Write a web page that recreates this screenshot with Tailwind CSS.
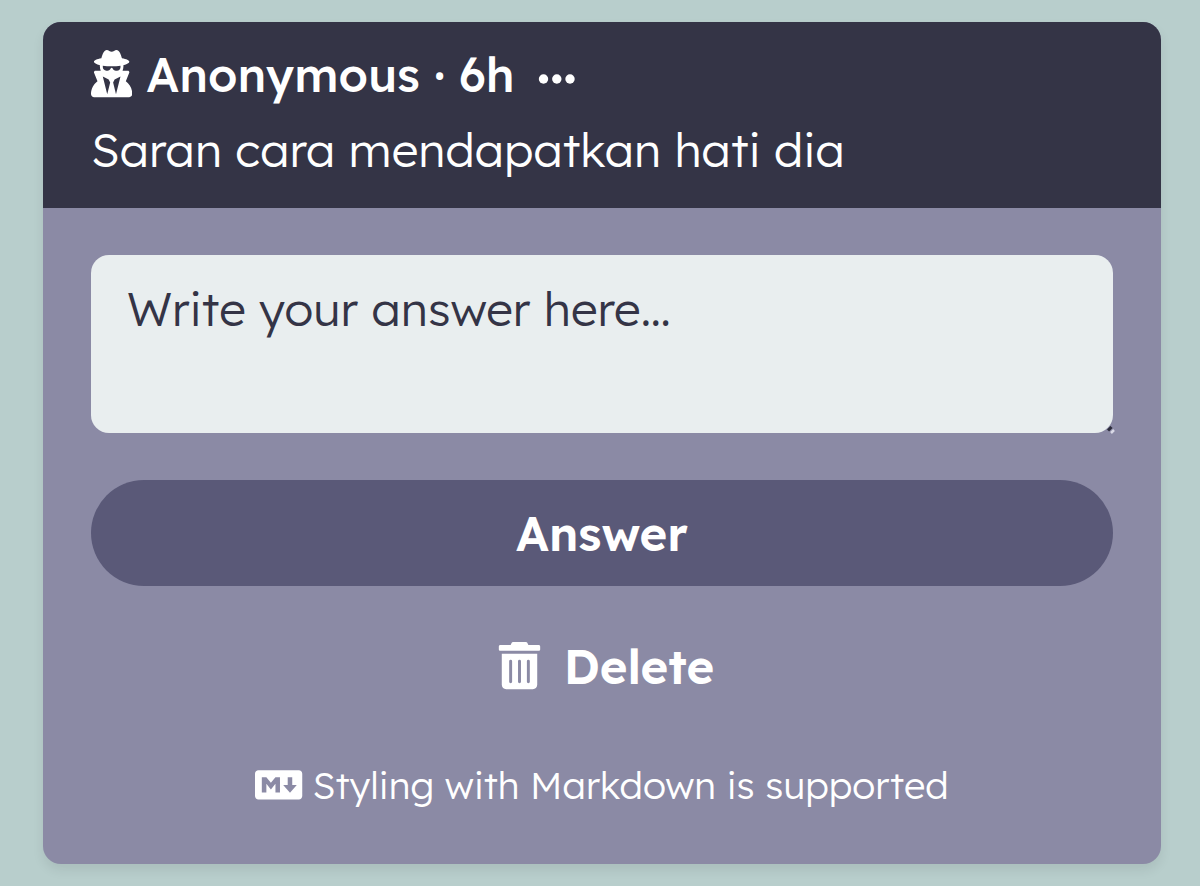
<!DOCTYPE html>
<html lang="id">

<head>
  <meta charset="UTF-8">
  <meta name="viewport" content="width=device-width, initial-scale=1.0">
  <title>Answer question</title>
  <script src="https://cdn.jsdelivr.net/npm/@tailwindcss/browser@4"></script>
</head>

<body class="h-screen overflow-hidden bg-[#b8cecc] pt-[22px] pl-[43px] font-['Lexend',sans-serif] text-white">

  <!-- Question card -->
  <div class="flex h-[842px] w-[1118px] flex-col overflow-hidden rounded-[18px] bg-[#8b8aa5] shadow-[0_6px_12px_rgba(0,0,0,0.08)]">

    <!-- Header -->
    <div class="h-[186px] bg-[#343446] px-12 pt-[21px]">
      <div class="flex h-[64px] items-center">
        <svg class="h-[47.25px] w-[41.3px] shrink-0 -translate-y-px" viewBox="0 0 448 512" fill="currentColor">
          <path d="M377.7 338.8l37.15-92.87C419 235.4 411.2 224 399.9 224h-57.48C348.5 209.2 352 193 352 176c0-4.117-.8359-8.057-1.217-12.08C390.7 155.1 416 142.3 416 128c0-16.08-31.75-30.28-80.31-38.99C323.8 45.15 304.9 0 277.4 0c-10.38 0-19.62 4.5-27.38 10.5c-15.25 11.88-36.75 11.88-52 0C190.3 4.5 181.1 0 170.7 0C143.2 0 124.4 45.16 112.5 88.98C63.83 97.68 32 111.9 32 128c0 14.34 25.31 27.13 65.22 35.92C96.84 167.9 96 171.9 96 176C96 193 99.47 209.2 105.5 224H48.02C36.7 224 28.96 235.4 33.16 245.9l37.15 92.87C27.87 370.4 0 420.4 0 477.3C0 496.5 15.52 512 34.66 512H413.3C432.5 512 448 496.5 448 477.3C448 420.4 420.1 370.4 377.7 338.8zM176 479.1L128 288l64 32l16 32L176 479.1zM271.1 479.1L240 352l16-32l64-32L271.1 479.1zM320 186C320 207 302.8 224 281.6 224h-12.33c-16.46 0-30.29-10.39-35.63-24.99C232.1 194.9 228.4 192 224 192S215.9 194.9 214.4 199C209 213.6 195.2 224 178.8 224h-12.33C145.2 224 128 207 128 185.1V169.5C156.3 173.6 188.1 176 224 176s67.74-2.383 96-6.5V186z" />
        </svg>
        <span class="ml-[14px] text-[47.25px] font-medium whitespace-nowrap">Anonymous · 6h</span>
        <button type="button" class="ml-[22px] translate-y-[4px]">
          <svg class="h-3 w-10" viewBox="0 0 40 12" fill="currentColor">
            <circle cx="6.5" cy="6" r="4.7" />
            <circle cx="19.8" cy="6" r="4.7" />
            <circle cx="33" cy="6" r="4.7" />
          </svg>
        </button>
      </div>
      <p class="h-[84px] text-[47.25px] leading-[86px] font-light whitespace-nowrap">Saran cara mendapatkan hati dia</p>
    </div>

    <!-- Answer form -->
    <form class="flex flex-col px-12 pt-[47px]" onsubmit="event.preventDefault()">
      <div class="relative h-[178px]">
        <textarea placeholder="Write your answer here…"
          class="block h-[178px] w-full resize-none overflow-hidden rounded-[18px] bg-[#e9eeef] px-9 pt-6 text-[47.25px] leading-[60px] font-light text-[#343446] placeholder:text-[#343446] focus:outline-none"></textarea>
        <svg class="absolute right-[-2px] bottom-[-1px] h-2 w-2" viewBox="0 0 8 8">
          <path d="M1 4.5 4.5 1" stroke="#2c2c3b" stroke-width="3" />
          <path d="M4 7 7 4" stroke="#d9d9e6" stroke-width="2.5" />
        </svg>
      </div>
      <button type="submit" class="mt-[47px] h-[106px] rounded-full bg-[#5a5978] pt-[2px] text-[47.25px] font-semibold">
        Answer
      </button>
      <button type="button" class="mt-[27px] flex h-[106px] items-center justify-center text-[47.25px] font-semibold">
        <svg class="mr-[15px] h-[47.25px] w-[59px]" viewBox="0 0 448 512" fill="currentColor">
          <path d="M32 464C32 490.5 53.5 512 80 512h288c26.5 0 48-21.5 48-48V128H32V464zM304 208a16 16 0 0 1 32 0v224a16 16 0 0 1-32 0zM208 208a16 16 0 0 1 32 0v224a16 16 0 0 1-32 0zM112 208a16 16 0 0 1 32 0v224a16 16 0 0 1-32 0zM432 32H320l-11.58-23.16C305.7 3.42 300.2 0 294.1 0H153.9c-6.061 0-11.6 3.424-14.31 8.844L128 32H16C7.164 32 0 39.16 0 48V80c0 8.836 7.164 16 16 16h416c8.838 0 16-7.164 16-16V48C448 39.16 440.8 32 432 32z" />
        </svg>
        <span class="pt-[2px]">Delete</span>
      </button>
    </form>

    <!-- Markdown hint -->
    <p class="mt-[36px] flex h-[60px] items-center justify-center text-[37.8px] font-light whitespace-nowrap">
      <svg class="mr-[10px] h-[37.8px] w-[47.25px]" viewBox="0 0 640 512" fill="currentColor">
        <path d="M593.8 59.1H46.2C20.7 59.1 0 79.8 0 105.2v301.5c0 25.5 20.7 46.2 46.2 46.2h547.7c25.5 0 46.2-20.7 46.1-46.1V105.2c0-25.4-20.7-46.1-46.2-46.1zM338.5 360.6H277v-120l-61.5 76.9-61.5-76.9v120H92.3V151.4h61.5l61.5 76.9 61.5-76.9h61.5v209.2zm135.3 3.1L381.5 256H443V151.4h61.5V256H566z" />
      </svg>
      <span>Styling with Markdown is supported</span>
    </p>
  </div>
</body>

</html>
